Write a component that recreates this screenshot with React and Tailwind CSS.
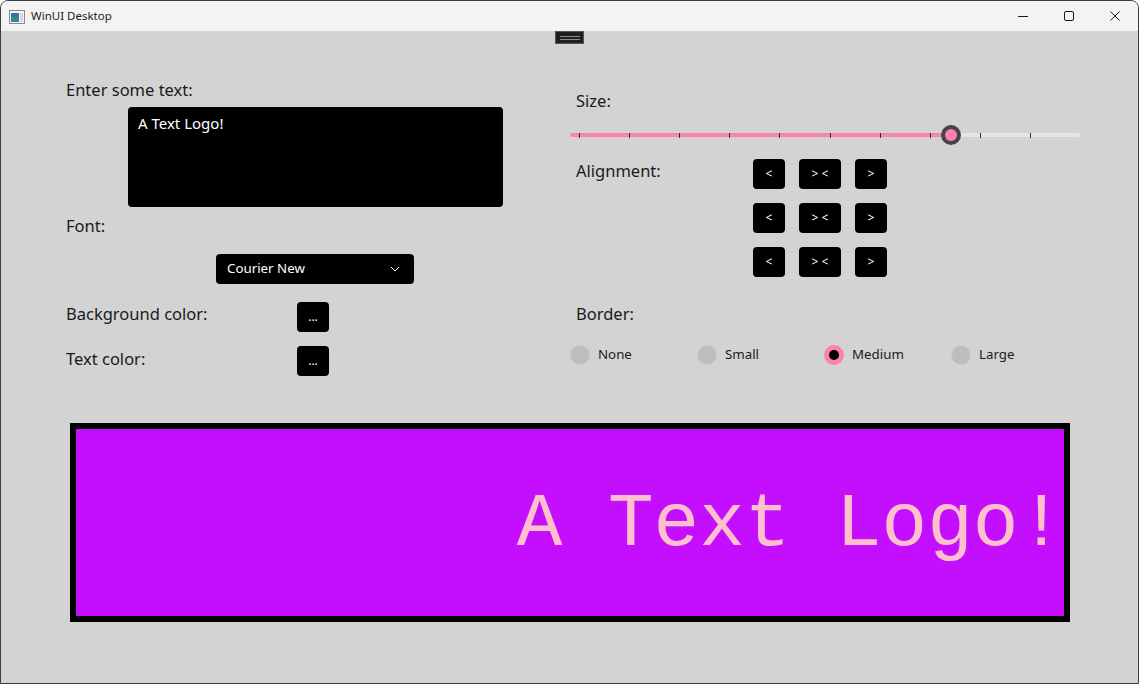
import { useState } from "react";

const ui = { fontFamily: '"Segoe UI", "Noto Sans", "Open Sans", sans-serif' };

function AppIcon() {
    return (
        <svg width="16" height="14" viewBox="0 0 16 14">
            <rect x="0.5" y="0.5" width="15" height="13" fill="#f4f4f4" stroke="#8a8a8a" />
            <rect x="2" y="3" width="8" height="9" fill="#2f8a8c" />
            <rect x="2" y="3" width="8" height="4" fill="#3a6fb0" />
            <rect x="11" y="3" width="3" height="9" fill="#d8d8d8" />
        </svg>
    );
}

function TitleBar() {
    return (
        <div className="h-[30px] flex items-center bg-[#f3f3f3] shrink-0">
            <div className="ml-[8px] mt-[1px] flex items-center"><AppIcon /></div>
            <span className="ml-[6px] text-[11.5px] text-[#1a1a1a]" style={ui}>WinUI Desktop</span>
            <div className="ml-auto flex h-full">
                <div className="w-[46px] flex items-center justify-center">
                    <svg width="10" height="10" viewBox="0 0 10 10"><path d="M0 5.5h10" stroke="#1a1a1a" strokeWidth="1" /></svg>
                </div>
                <div className="w-[46px] flex items-center justify-center">
                    <svg width="10" height="10" viewBox="0 0 10 10"><rect x="0.5" y="0.5" width="9" height="9" rx="1.5" fill="none" stroke="#1a1a1a" strokeWidth="1" /></svg>
                </div>
                <div className="w-[46px] flex items-center justify-center">
                    <svg width="10" height="10" viewBox="0 0 10 10"><path d="M0.5 0.5l9 9M9.5 0.5l-9 9" stroke="#1a1a1a" strokeWidth="1" /></svg>
                </div>
            </div>
        </div>
    );
}

function BlackButton({ label, w = "w-[32px]" }) {
    return (
        <button className={`${w} h-[30px] bg-black rounded-[4px] text-white text-[12px] flex items-center justify-center`} style={ui}>
            {label}
        </button>
    );
}

function Slider() {
    const ticks = [9, 59, 109, 159, 209, 260, 310, 360, 410, 460];
    return (
        <div className="relative w-[510px] h-[20px] flex items-center">
            <div className="w-full h-[4px] rounded-full bg-[#e6e6e6] flex">
                <div className="w-[381px] h-full rounded-full bg-[#fd80b0]" />
            </div>
            {ticks.map((t) => (
                <div key={t} className="absolute top-[8px] w-[1px] h-[5px] bg-[#333333]" style={{ left: t }} />
            ))}
            <div className="absolute left-[371px] top-0 w-[20px] h-[20px] rounded-full bg-[#454545] flex items-center justify-center">
                <div className="w-[12px] h-[12px] rounded-full bg-[#fd80b0]" />
            </div>
        </div>
    );
}

function Radio({ label, checked }) {
    return (
        <div className="w-[127px] flex items-center">
            {checked ? (
                <div className="w-[20px] h-[20px] rounded-full bg-[#fd80b0] flex items-center justify-center">
                    <div className="w-[10px] h-[10px] rounded-full bg-black" />
                </div>
            ) : (
                <div className="w-[20px] h-[20px] rounded-full bg-[#bdbdbd] border border-[#c8c8c8]" />
            )}
            <span className="ml-[8px] text-[13.3px] text-[#1a1a1a]" style={ui}>{label}</span>
        </div>
    );
}

export default function App() {
    const [text] = useState("A Text Logo!");
    return (
        <div className="w-[1139px] h-[684px] flex flex-col border border-[#3c3c3c] rounded-t-[8px] overflow-hidden bg-[#d3d3d3]">
            <TitleBar />
            <div className="relative flex-1 bg-[#d3d3d3]">
                {/* handle */}
                <div className="absolute left-[554px] top-0 w-[29px] h-[13px] bg-[#1f1f1f] border border-[#555555] flex flex-col items-center justify-center gap-[2px]">
                    <div className="w-[20px] h-[1px] bg-[#8a8a8a]" />
                    <div className="w-[20px] h-[1px] bg-[#8a8a8a]" />
                </div>

                <div className="flex pl-[65px] text-[#1a1a1a]" style={ui}>
                    {/* left column */}
                    <div className="w-[504px] shrink-0 flex flex-col">
                        <div className="mt-[48px] h-[22px] leading-[22px] text-[16.5px]">Enter some text:</div>
                        <div className="mt-[6px] ml-[62px] w-[375px] h-[100px] bg-black rounded-[4px] px-[10px] pt-[5px] text-white text-[15px]">
                            {text}
                        </div>
                        <div className="mt-[8px] h-[22px] leading-[22px] text-[16.5px]">Font:</div>
                        <div className="mt-[17px] ml-[150px] w-[198px] h-[30px] bg-black rounded-[4px] flex items-center pl-[11px] pr-[14px] text-white text-[13.3px]">
                            <span>Courier New</span>
                            <svg className="ml-auto" width="10" height="6" viewBox="0 0 10 6"><path d="M1 1l4 4 4-4" fill="none" stroke="#ffffff" strokeWidth="1" /></svg>
                        </div>
                        <div className="mt-[18px] flex items-center h-[30px]">
                            <div className="w-[231px] text-[16.5px] leading-[22px] -mt-[6px]">Background color:</div>
                            <BlackButton label="..." />
                        </div>
                        <div className="mt-[14px] flex items-center h-[30px]">
                            <div className="w-[231px] text-[16.5px] leading-[22px] -mt-[4px]">Text color:</div>
                            <BlackButton label="..." />
                        </div>
                    </div>

                    {/* right column */}
                    <div className="flex flex-col">
                        <div className="mt-[59px] ml-[6px] h-[22px] leading-[22px] text-[16.5px]">Size:</div>
                        <div className="mt-[13px]"><Slider /></div>
                        <div className="mt-[14px] ml-[6px] flex">
                            <div className="w-[177px] mt-[1px] h-[22px] leading-[22px] text-[16.5px]">Alignment:</div>
                            <div className="grid grid-cols-[32px_42px_32px] gap-x-[14px] gap-y-[14px]">
                                {[0, 1, 2].map((r) => (
                                    <div key={r} className="contents">
                                        <BlackButton label="<" />
                                        <BlackButton label="> <" w="w-[42px]" />
                                        <BlackButton label=">" />
                                    </div>
                                ))}
                            </div>
                        </div>
                        <div className="mt-[26px] ml-[6px] h-[22px] leading-[22px] text-[16.5px]">Border:</div>
                        <div className="mt-[20px] flex">
                            <Radio label="None" />
                            <Radio label="Small" />
                            <Radio label="Medium" checked />
                            <Radio label="Large" />
                        </div>
                    </div>
                </div>

                {/* logo preview */}
                <div className="mt-[47px] ml-[69px] w-[1000px] h-[199px] border-[6px] border-black bg-[#c40fff] flex items-center justify-end overflow-hidden">
                    <span className="text-[76px] leading-[86px] mt-[4px] text-[#ffc0cb] whitespace-pre" style={{ fontFamily: '"Liberation Mono", "Courier New", monospace' }}>
                        {text}
                    </span>
                </div>
            </div>
        </div>
    );
}
